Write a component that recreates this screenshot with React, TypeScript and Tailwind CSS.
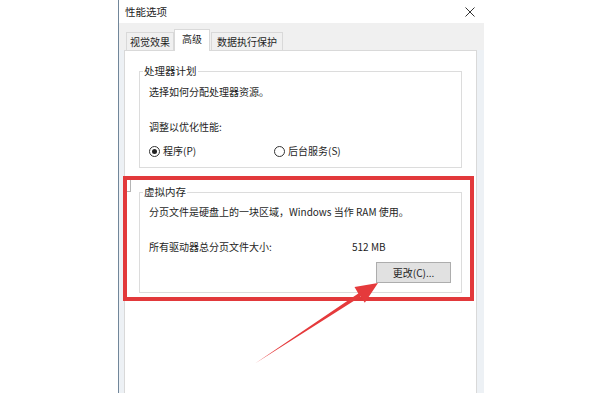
import React from "react";

function Radio({ checked }: { checked?: boolean }) {
  return (
    <span className="flex h-[11px] w-[11px] items-center justify-center rounded-full border border-[#333] bg-white">
      {checked && <span className="h-[5px] w-[5px] rounded-full bg-[#222]" />}
    </span>
  );
}

export default function App() {
  return (
    <div className="relative flex h-[400px] w-[600px] overflow-hidden bg-white font-['Noto_Sans_CJK_SC','Noto_Sans',sans-serif] text-[10px] leading-[14px] text-[#1e1e1e]">
      <div className="ml-[118px] flex h-[393px] w-[366px] flex-col border-l border-[#71869a] bg-[#edf1f5]">
        {/* title bar */}
        <div className="flex h-[23px] items-center justify-between bg-white pl-[6px] pr-[9px]">
          <span className="text-[10.5px] text-[#222]">性能选项</span>
          <svg width="10" height="10" viewBox="0 0 10 10" className="mt-[1px]">
            <path d="M0.5 0.5 L9.5 9.5 M9.5 0.5 L0.5 9.5" stroke="#333" strokeWidth="1" />
          </svg>
        </div>

        {/* tabs */}
        <div className="flex h-[27px] items-end bg-[#f0f0f0] pl-[7px]">
          <div className="flex h-[18px] w-[48px] items-center justify-center border border-b-0 border-[#d9d9d9] bg-[#f0f0f0]">
            视觉效果
          </div>
          <div className="relative z-10 -mb-px flex h-[22px] w-[36px] items-center justify-center border border-b-0 border-[#d9d9d9] bg-white pb-[3px]">
            高级
          </div>
          <div className="ml-px flex h-[18px] w-[72px] items-center justify-center border border-b-0 border-[#d9d9d9] bg-[#f0f0f0]">
            数据执行保护
          </div>
        </div>

        {/* tab panel */}
        <div className="ml-[5px] mr-[7px] flex flex-1 flex-col border border-b-0 border-[#d9d9d9] bg-white px-[14px]">
          <fieldset className="mt-[13px] border border-[#dcdcdc] pl-[3px] pb-[9px]">
            <legend className="px-[1px] text-[10.5px]">处理器计划</legend>
            <div className="ml-[6px] flex flex-col">
              <div className="mt-[7px]">选择如何分配处理器资源。</div>
              <div className="mt-[21px]">调整以优化性能:</div>
              <div className="mt-[10px] flex items-center">
                <div className="flex w-[125px] items-center gap-[3px]">
                  <Radio checked />
                  <span>程序(P)</span>
                </div>
                <div className="flex items-center gap-[3px]">
                  <Radio />
                  <span>后台服务(S)</span>
                </div>
              </div>
            </div>
          </fieldset>

          <fieldset className="mt-[17px] border border-[#dcdcdc] pl-[3px] pr-[10px] pb-[9px]">
            <legend className="px-[1px] text-[10.5px]">虚拟内存</legend>
            <div className="ml-[6px] flex flex-col">
              <div className="mt-[6px]">分页文件是硬盘上的一块区域，Windows 当作 RAM 使用。</div>
              <div className="mt-[21px] flex">
                <span className="w-[203px]">所有驱动器总分页文件大小:</span>
                <span>512 MB</span>
              </div>
              <div className="mt-[8px] flex justify-end">
                <div className="flex h-[21px] w-[75px] items-center justify-center border border-[#adadad] bg-[#e1e1e1]">
                  更改(C)...
                </div>
              </div>
            </div>
          </fieldset>
        </div>
      </div>

      {/* stray notch */}
      <div className="absolute left-[126px] top-[180px] h-[12px] w-[5px] border-r border-b border-[#b5b5b5] bg-white" />

      {/* red annotation box */}
      <div className="absolute left-[123px] top-[176px] h-[125px] w-[351px] border-[4px] border-[#e2393b]" />

      {/* arrow */}
      <svg className="absolute left-0 top-0" width="600" height="400" viewBox="0 0 600 400">
        <polygon
          points="378,283 354.5,287 358.3,293.6 255,363.5 360.8,296.6 364.8,302.8"
          fill="#e53a3c"
        />
      </svg>
    </div>
  );
}
